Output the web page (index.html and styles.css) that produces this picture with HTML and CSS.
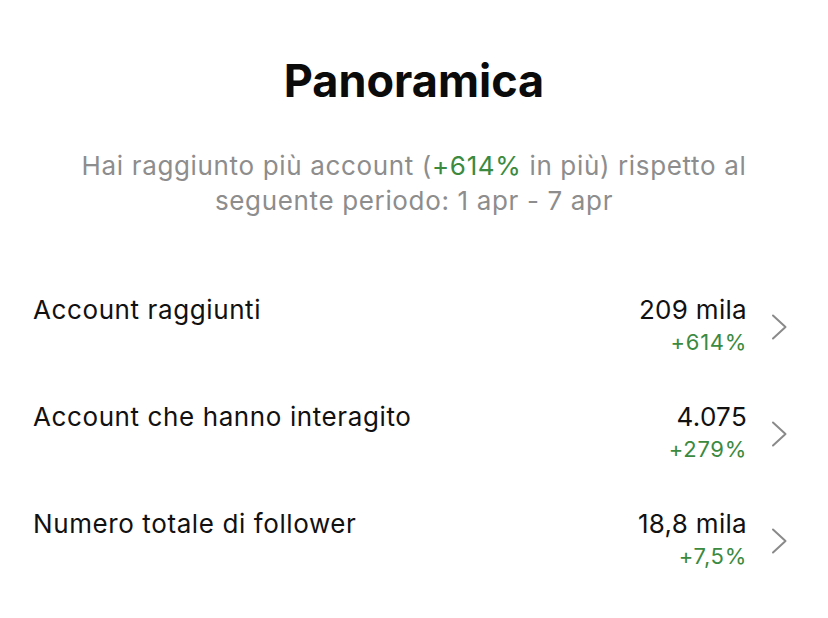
FILE: index.html
```html
<!DOCTYPE html>
<html lang="it">
<head>
<meta charset="utf-8">
<link rel="stylesheet" href="styles.css">
</head>
<body>
<main class="panel">
  <h1 class="title">Panoramica</h1>
  <p class="subtitle">Hai raggiunto più account (<span class="up">+614%</span> in più) rispetto al seguente periodo: 1 apr - 7 apr</p>
  <ul class="stats">
    <li class="row">
      <span class="label">Account raggiunti</span>
      <span class="values"><span class="value">209 mila</span><span class="delta">+614%</span></span>
      <svg class="chev" width="18" height="26" viewBox="0 0 18 26"><path d="M3 1.5 L15.5 13 L3 24.5" fill="none" stroke="#8a8a8a" stroke-width="2" stroke-linecap="round" stroke-linejoin="round"/></svg>
    </li>
    <li class="row">
      <span class="label">Account che hanno interagito</span>
      <span class="values"><span class="value">4.075</span><span class="delta">+279%</span></span>
      <svg class="chev" width="18" height="26" viewBox="0 0 18 26"><path d="M3 1.5 L15.5 13 L3 24.5" fill="none" stroke="#8a8a8a" stroke-width="2" stroke-linecap="round" stroke-linejoin="round"/></svg>
    </li>
    <li class="row">
      <span class="label">Numero totale di follower</span>
      <span class="values"><span class="value">18,8 mila</span><span class="delta">+7,5%</span></span>
      <svg class="chev" width="18" height="26" viewBox="0 0 18 26"><path d="M3 1.5 L15.5 13 L3 24.5" fill="none" stroke="#8a8a8a" stroke-width="2" stroke-linecap="round" stroke-linejoin="round"/></svg>
    </li>
  </ul>
</main>
</body>
</html>
```
FILE: styles.css
```css
* { box-sizing: border-box; }
html, body { margin: 0; padding: 0; background: #fff; }
body {
  font-family: Inter, "Noto Sans", "DejaVu Sans", sans-serif;
  color: #111;
  width: 828px;
  height: 618px;
  overflow: hidden;
}
.panel { padding: 53px 0 0; }
.title {
  margin: 0;
  text-align: center;
  font-size: 45px;
  font-weight: 700;
  line-height: 56px;
  letter-spacing: 0;
  color: #0b0b0b;
}
.subtitle {
  margin: 39px auto 0;
  width: 720px;
  text-align: center;
  font-size: 26px;
  line-height: 35px;
  letter-spacing: 0.65px;
  color: #8d8d8d;
}
.up { color: #3b8a40; }
.stats {
  list-style: none;
  margin: 76px 0 0;
  padding: 0 40px 0 33px;
  display: flex;
  flex-direction: column;
  gap: 43px;
}
.row {
  display: flex;
  align-items: flex-start;
}
.label { flex: 1; font-size: 26px; line-height: 32px; letter-spacing: 0.6px; }
.values { display: flex; flex-direction: column; align-items: flex-end; }
.value { font-size: 26px; line-height: 32px; letter-spacing: 0.3px; }
.delta { font-size: 22px; line-height: 32px; letter-spacing: 0.7px; color: #3b8a40; }
.chev { margin: 20px 0 0 23px; }
```
